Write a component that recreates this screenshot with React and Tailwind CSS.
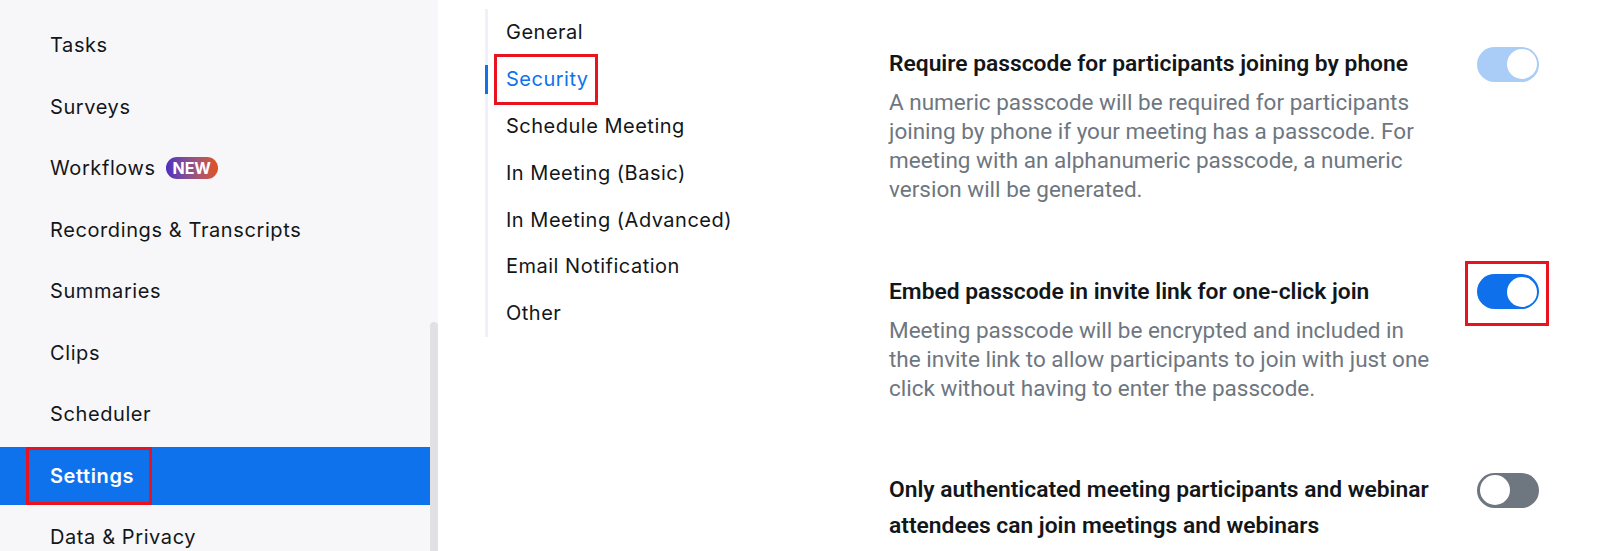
import React from 'react';

const SIDEBAR_ITEMS = [
    { label: 'Tasks' },
    { label: 'Surveys' },
    { label: 'Workflows', badge: true },
    { label: 'Recordings & Transcripts' },
    { label: 'Summaries' },
    { label: 'Clips' },
    { label: 'Scheduler' },
    { label: 'Settings', active: true },
    { label: 'Data & Privacy' },
];

const TABS = [
    'General',
    'Security',
    'Schedule Meeting',
    'In Meeting (Basic)',
    'In Meeting (Advanced)',
    'Email Notification',
    'Other',
];

const SETTINGS = [
    {
        id: 'phone',
        title: 'Require passcode for participants joining by phone',
        desc: 'A numeric passcode will be required for participants joining by phone if your meeting has a passcode. For meeting with an alphanumeric passcode, a numeric version will be generated.',
        state: 'locked',
    },
    {
        id: 'embed',
        title: 'Embed passcode in invite link for one-click join',
        desc: 'Meeting passcode will be encrypted and included in the invite link to allow participants to join with just one click without having to enter the passcode.',
        state: 'on',
        highlight: true,
    },
    {
        id: 'auth',
        title: 'Only authenticated meeting participants and webinar attendees can join meetings and webinars',
        state: 'off',
    },
];

function Toggle({ state }) {
    const track =
        state === 'on' ? 'bg-[#0e71eb]' : state === 'locked' ? 'bg-[#a9cdf7]' : 'bg-[#6e7680]';
    const knob = state === 'off' ? 'justify-start' : 'justify-end';
    return (
        <div className={`w-[62px] h-[35px] rounded-full p-[2.5px] flex ${knob} ${track}`}>
            <div className="w-[30px] h-[30px] rounded-full bg-white" />
        </div>
    );
}

function Sidebar() {
    return (
        <div className="relative w-[438px] h-full bg-[#f7f7f9] shrink-0">
            <ul className="w-[430px] pt-[16px] flex flex-col gap-[3.5px]">
                {SIDEBAR_ITEMS.map(item => (
                    <li
                        key={item.label}
                        className={`h-[58px] flex items-center text-[20px] tracking-[0.6px] ${item.active ? 'bg-[#0e72ed] text-white font-semibold' : 'text-[#131619]'}`}
                    >
                        {item.active ? (
                            <span className="ml-[26px] w-[126px] h-full border-[3px] border-[#e8131f] flex items-center pl-[21px]">
                                {item.label}
                            </span>
                        ) : (
                            <span className="pl-[50px] flex items-center">
                                {item.label}
                                {item.badge && (
                                    <span className="ml-[10px] h-[22px] w-[52px] rounded-full bg-gradient-to-r from-[#4f2bc1] to-[#e2500b] text-white text-[16px] tracking-normal font-bold flex items-center justify-center leading-none">
                                        NEW
                                    </span>
                                )}
                            </span>
                        )}
                    </li>
                ))}
            </ul>
            {/* scrollbar thumb */}
            <div className="absolute left-[430px] top-[322px] w-[8px] h-[240px] rounded-t-full bg-[#e1e1e3]" />
        </div>
    );
}

function SettingsTabs() {
    return (
        <div className="w-[451px] shrink-0 pl-[47px] pt-[9px]">
            <ul className="border-l-[3px] border-[#eef1f6]">
                {TABS.map(tab => {
                    const active = tab === 'Security';
                    return (
                        <li key={tab} className="relative h-[46.8px] flex items-center text-[20px] tracking-[0.5px]">
                            {active ? (
                                <>
                                    <span className="absolute -left-[3px] top-[9px] w-[3px] h-[29px] bg-[#0e72ed]" />
                                    <span className="ml-[6px] h-[51px] w-[104px] border-[3px] border-[#e8131f] flex items-center pl-[9px] text-[#0e72ed]">
                                        {tab}
                                    </span>
                                </>
                            ) : (
                                <span className="pl-[18px] text-[#131619]">{tab}</span>
                            )}
                        </li>
                    );
                })}
            </ul>
        </div>
    );
}

export default function App() {
    return (
        <div className="w-[1600px] h-[551px] overflow-hidden flex bg-white" style={{ fontFamily: 'Inter, "Noto Sans", sans-serif' }}>
            <Sidebar />
            <SettingsTabs />
            <div className="flex-1 pt-[46px] pr-[61px] flex flex-col gap-[69.5px] font-['Roboto',sans-serif]">
                {SETTINGS.map(s => (
                    <div key={s.id} className="flex justify-between items-start">
                        <div className="w-[575px]">
                            <h3 className="text-[22.8px] leading-[36px] font-semibold text-[#131619]">{s.title}</h3>
                            {s.desc && (
                                <p className="w-[545px] mt-[6px] text-[22.5px] leading-[29px] text-[#6e7680]">{s.desc}</p>
                            )}
                        </div>
                        <div className="relative mt-[0.5px]">
                            <Toggle state={s.state} />
                            {s.highlight && (
                                <div className="absolute left-[-12px] right-[-10px] top-[-13px] bottom-[-17px] border-[3px] border-[#e8131f]" />
                            )}
                        </div>
                    </div>
                ))}
            </div>
        </div>
    );
}
